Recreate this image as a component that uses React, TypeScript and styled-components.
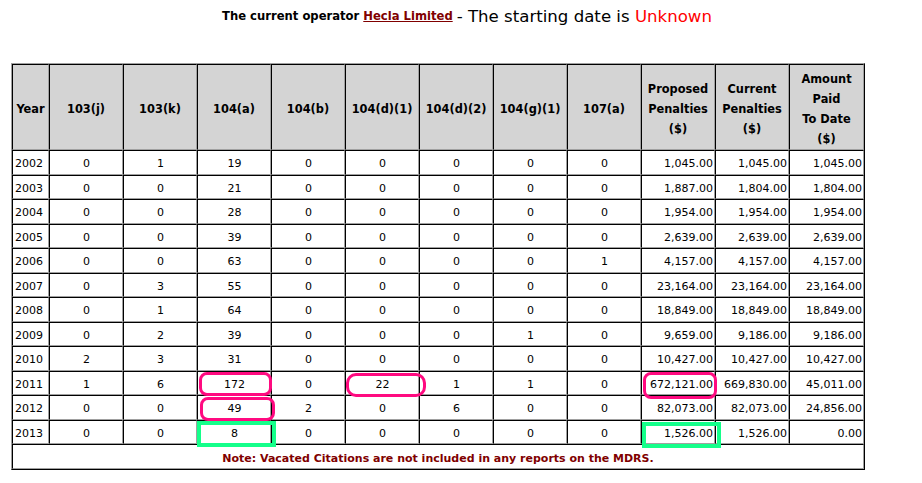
import React from "react";
import styled, { createGlobalStyle } from "styled-components";

const Global = createGlobalStyle`
  html, body { margin: 0; padding: 0; background: #ffffff; }
  body { font-family: "DejaVu Sans", Verdana, sans-serif; color: #000; }
`;

const Page = styled.div`
  width: 922px;
  height: 483px;
  display: flex;
  flex-direction: column;
  overflow: hidden;
`;

const TitleBar = styled.div`
  height: 32px;
  display: flex;
  align-items: center;
  justify-content: center;
  padding-left: 12px;
  white-space: nowrap;
`;

const Lead = styled.span`
  font-size: 11.6px;
  font-weight: bold;
`;

const OperatorLink = styled.a`
  font-size: 11.6px;
  font-weight: bold;
  color: #800000;
  text-decoration: underline;
  margin: 0 4px;
`;

const Big = styled.span`
  font-size: 16.6px;
`;

const Unknown = styled.span`
  font-size: 16.6px;
  color: #ff0000;
`;

const TableWrap = styled.div`
  position: relative;
  margin: 31px 0 0 11px;
  width: max-content;
`;

const Grid = styled.table`
  border-collapse: separate;
  border-spacing: 0;
  table-layout: fixed;
  border-top: 1px solid #a0a0a0;
  border-left: 1px solid #a0a0a0;
  border-right: 1px solid #000;
  border-bottom: 1px solid #000;
  font-size: 11px;
`;

const Head = styled.th<{ $w: number }>`
  width: ${(p) => p.$w}px;
  height: 86px;
  box-sizing: border-box;
  background: #d4d4d4;
  border-top: 1px solid #000;
  border-left: 1px solid #000;
  border-right: 1px solid #a0a0a0;
  border-bottom: 1px solid #a0a0a0;
  padding: 4px 1px 0;
  font-weight: bold;
  font-size: 11.4px;
  line-height: 20px;
  text-align: center;
  vertical-align: middle;
`;

const Cell = styled.td<{ $align: "left" | "center" | "right" }>`
  height: 24.5px;
  box-sizing: border-box;
  background: #fff;
  border-top: 1px solid #000;
  border-left: 1px solid #000;
  border-right: 1px solid #a0a0a0;
  border-bottom: 1px solid #a0a0a0;
  padding: 3px 1px 0 2px;
  text-align: ${(p) => p.$align};
  vertical-align: middle;
  white-space: nowrap;
`;

const NoteCell = styled.td`
  height: 25px;
  box-sizing: border-box;
  border-top: 1px solid #000;
  border-left: 1px solid #000;
  border-right: 1px solid #a0a0a0;
  border-bottom: 1px solid #a0a0a0;
  text-align: center;
  vertical-align: middle;
  font-weight: bold;
  color: #800000;
  padding: 3px 0 0;
`;

const Mark = styled.div<{
  $x: number;
  $y: number;
  $w: number;
  $h: number;
  $tone: "pink" | "green";
  $r: number;
}>`
  position: absolute;
  left: ${(p) => p.$x}px;
  top: ${(p) => p.$y}px;
  width: ${(p) => p.$w}px;
  height: ${(p) => p.$h}px;
  box-sizing: border-box;
  border: ${(p) => (p.$tone === "pink" ? "3px solid #ff0a80" : "4px solid #14ff8a")};
  border-radius: ${(p) => p.$r}px;
  pointer-events: none;
`;

const headers: { label: React.ReactNode; w: number }[] = [
  { label: "Year", w: 37 },
  { label: "103(j)", w: 74 },
  { label: "103(k)", w: 74 },
  { label: "104(a)", w: 74 },
  { label: "104(b)", w: 74 },
  { label: "104(d)(1)", w: 74 },
  { label: "104(d)(2)", w: 74 },
  { label: "104(g)(1)", w: 74 },
  { label: "107(a)", w: 74 },
  { label: <>Proposed<br />Penalties<br />($)</>, w: 74 },
  { label: <>Current<br />Penalties<br />($)</>, w: 74 },
  { label: <>Amount<br />Paid<br />To Date<br />($)</>, w: 75 },
];

const rows: string[][] = [
  ["2002", "0", "1", "19", "0", "0", "0", "0", "0", "1,045.00", "1,045.00", "1,045.00"],
  ["2003", "0", "0", "21", "0", "0", "0", "0", "0", "1,887.00", "1,804.00", "1,804.00"],
  ["2004", "0", "0", "28", "0", "0", "0", "0", "0", "1,954.00", "1,954.00", "1,954.00"],
  ["2005", "0", "0", "39", "0", "0", "0", "0", "0", "2,639.00", "2,639.00", "2,639.00"],
  ["2006", "0", "0", "63", "0", "0", "0", "0", "1", "4,157.00", "4,157.00", "4,157.00"],
  ["2007", "0", "3", "55", "0", "0", "0", "0", "0", "23,164.00", "23,164.00", "23,164.00"],
  ["2008", "0", "1", "64", "0", "0", "0", "0", "0", "18,849.00", "18,849.00", "18,849.00"],
  ["2009", "0", "2", "39", "0", "0", "0", "1", "0", "9,659.00", "9,186.00", "9,186.00"],
  ["2010", "2", "3", "31", "0", "0", "0", "0", "0", "10,427.00", "10,427.00", "10,427.00"],
  ["2011", "1", "6", "172", "0", "22", "1", "1", "0", "672,121.00", "669,830.00", "45,011.00"],
  ["2012", "0", "0", "49", "2", "0", "6", "0", "0", "82,073.00", "82,073.00", "24,856.00"],
  ["2013", "0", "0", "8", "0", "0", "0", "0", "0", "1,526.00", "1,526.00", "0.00"],
];

const marks = [
  { x: 188, y: 309, w: 73, h: 24, tone: "pink" as const, r: 8 },
  { x: 189, y: 334, w: 75, h: 24, tone: "pink" as const, r: 8 },
  { x: 335, y: 310, w: 80, h: 24, tone: "pink" as const, r: 10 },
  { x: 632, y: 309, w: 74, h: 27, tone: "pink" as const, r: 8 },
  { x: 186, y: 358, w: 79, h: 26, tone: "green" as const, r: 0 },
  { x: 631, y: 359, w: 79, h: 26, tone: "green" as const, r: 0 },
];

const alignFor = (i: number): "left" | "center" | "right" =>
  i === 0 ? "left" : i >= 9 ? "right" : "center";

export default function App() {
  return (
    <Page>
      <Global />
      <TitleBar>
        <Lead>The current operator</Lead>
        <OperatorLink href="#">Hecla Limited</OperatorLink>
        <Big>- The starting date is&nbsp;</Big>
        <Unknown>Unknown</Unknown>
      </TitleBar>
      <TableWrap>
        <Grid>
          <thead>
            <tr>
              {headers.map((h, i) => (
                <Head key={i} $w={h.w}>
                  {h.label}
                </Head>
              ))}
            </tr>
          </thead>
          <tbody>
            {rows.map((r) => (
              <tr key={r[0]}>
                {r.map((v, i) => (
                  <Cell key={i} $align={alignFor(i)}>
                    {v}
                  </Cell>
                ))}
              </tr>
            ))}
            <tr>
              <NoteCell colSpan={12}>
                Note: Vacated Citations are not included in any reports on the MDRS.
              </NoteCell>
            </tr>
          </tbody>
        </Grid>
        {marks.map((m, i) => (
          <Mark key={i} $x={m.x} $y={m.y} $w={m.w} $h={m.h} $tone={m.tone} $r={m.r} />
        ))}
      </TableWrap>
    </Page>
  );
}
